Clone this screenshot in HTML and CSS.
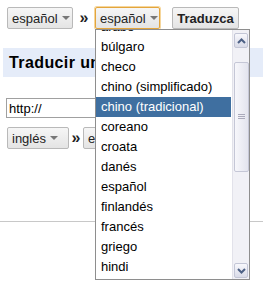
FILE: index.html
```html
<!DOCTYPE html>
<html>
<head>
  <meta charset="UTF-8" />
  <title>Traducir</title>
  <link rel="stylesheet" href="styles.css">
</head>
<body>
  <div class="page">
    <div class="toolbar">
      <button class="lang lang-from">español <span class="caret"></span></button>
      <span class="swap">»</span>
      <button class="lang lang-to focused">español <span class="caret"></span></button>
      <button class="go">Traduzca</button>
    </div>

    <h2 class="banner">Traducir una página web</h2>

    <div class="url-row">
      <input type="text" class="url" value="http://" />
    </div>

    <div class="toolbar second">
      <button class="lang lang-small">inglés <span class="caret"></span></button>
      <span class="swap">»</span>
      <button class="lang">español <span class="caret"></span></button>
    </div>

    <hr class="divider" />

    <!-- open language menu -->
    <div class="menu">
      <ul class="options">
        <li class="first">árabe</li>
        <li>búlgaro</li>
        <li>checo</li>
        <li>chino (simplificado)</li>
        <li class="selected">chino (tradicional)</li>
        <li>coreano</li>
        <li>croata</li>
        <li>danés</li>
        <li>español</li>
        <li>finlandés</li>
        <li>francés</li>
        <li>griego</li>
        <li>hindi</li>
      </ul>
      <div class="scrollbar">
        <div class="arrow up">
          <svg width="9" height="6" viewBox="0 0 9 6"><polyline points="1,5 4.5,1.5 8,5" fill="none" stroke="#4d6185" stroke-width="2"/></svg>
        </div>
        <div class="thumb">
          <svg width="7" height="6" viewBox="0 0 7 6"><path d="M0 0.5h7M0 2.5h7M0 4.5h7" stroke="#aab" stroke-width="1"/></svg>
        </div>
        <div class="arrow down">
          <svg width="9" height="6" viewBox="0 0 9 6"><polyline points="1,1 4.5,4.5 8,1" fill="none" stroke="#4d6185" stroke-width="2"/></svg>
        </div>
      </div>
    </div>
  </div>
</body>
</html>
```

FILE: styles.css
```css
body {
  margin: 0;
  font-family: "Liberation Sans", Arial, sans-serif;
  font-size: 13px;
  color: #000;
  background: #fff;
}

.page {
  position: relative;
  width: 263px;
  height: 291px;
  overflow: hidden;
}

.toolbar {
  display: flex;
  align-items: center;
  padding: 7px 0 0 7px;
  height: 22px;
}

.toolbar.second {
  padding-top: 9px;
}

button {
  font-family: inherit;
  font-size: 13px;
  height: 22px;
  padding: 0 4px;
  border: 1px solid #b9b9b9;
  border-radius: 2px;
  background: linear-gradient(#f6f6f6, #e4e4e4);
  color: #222;
  display: flex;
  align-items: center;
}

.lang {
  width: 66px;
}

.lang-small {
  width: 62px;
}

.caret {
  display: inline-block;
  margin-left: 4px;
  border-left: 4px solid transparent;
  border-right: 4px solid transparent;
  border-top: 4px solid #777;
}

.swap {
  font-weight: bold;
  font-size: 16px;
  width: 22px;
  text-align: center;
  color: #222;
}

.toolbar.second .swap {
  width: 14px;
}

.focused {
  width: 65px;
  border-color: #e3a53c;
  box-shadow: 0 0 0 1px #f6d69b;
}

.go {
  margin-left: 12px;
  width: 67px;
  font-weight: bold;
  justify-content: center;
}

.banner {
  margin: 19px 0 0 3px;
  height: 29px;
  line-height: 30px;
  padding-left: 6px;
  background: #e5ecf9;
  font-size: 16px;
  letter-spacing: 0.4px;
  white-space: nowrap;
  overflow: hidden;
}

.url-row {
  padding: 21px 0 0 6px;
}

.url {
  box-sizing: border-box;
  width: 240px;
  height: 20px;
  border: 1px solid #a0a0a0;
  padding: 0 2px;
  font-family: inherit;
  font-size: 13px;
}

.divider {
  margin: 72px 0 0;
  border: none;
  border-top: 1px solid #c8c8c8;
}

.menu {
  position: absolute;
  left: 95px;
  top: 29px;
  width: 153px;
  height: 249px;
  border: 1px solid #8e8e8e;
  background: #fff;
  display: flex;
  overflow: hidden;
}

.options {
  list-style: none;
  margin: 0;
  padding: 0;
  width: 136px;
}

.options li {
  height: 20px;
  line-height: 20px;
  padding-left: 5px;
  white-space: nowrap;
}

.options li.first {
  margin-top: -13px;
}

.options li.selected {
  background: #3f6fa0;
  color: #fff;
}

.scrollbar {
  width: 16px;
  margin-left: 1px;
  background: #f1f1f6;
  border-left: 1px solid #e2e2ea;
  display: flex;
  flex-direction: column;
  align-items: center;
}

.arrow {
  box-sizing: border-box;
  width: 14px;
  height: 15px;
  border: 1px solid #c3c6d6;
  border-radius: 2px;
  background: linear-gradient(#f8f8fc, #d9dbe8);
  display: flex;
  align-items: center;
  justify-content: center;
}

.arrow.up {
  margin-top: 3px;
}

.arrow.down {
  margin-top: auto;
  margin-bottom: 1px;
}

.thumb {
  box-sizing: border-box;
  margin-top: 14px;
  width: 15px;
  height: 110px;
  border: 1px solid #c5c7d6;
  border-radius: 2px;
  background: linear-gradient(90deg, #f7f7fb, #e3e4ee);
  display: flex;
  align-items: center;
  justify-content: center;
}
```
